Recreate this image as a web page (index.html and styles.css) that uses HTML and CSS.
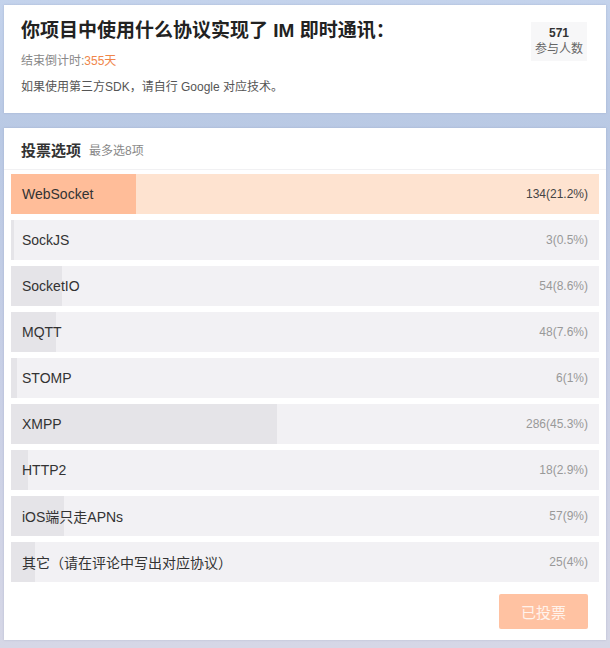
FILE: index.html
```html
<!DOCTYPE html>
<html lang="zh">
<head>
<meta charset="utf-8">
<title>投票</title>
<link rel="stylesheet" href="styles.css">
</head>
<body>
<div class="page">
  <section class="card intro">
    <div class="intro-main">
      <h1 class="title">你项目中使用什么协议实现了 IM 即时通讯：</h1>
      <p class="countdown">结束倒计时:<span class="days">355天</span></p>
      <p class="desc">如果使用第三方SDK，请自行 Google 对应技术。</p>
    </div>
    <div class="badge">
      <div class="badge-num">571</div>
      <div class="badge-label">参与人数</div>
    </div>
  </section>

  <section class="card poll">
    <div class="poll-head">
      <span class="poll-title">投票选项</span>
      <span class="poll-limit">最多选8项</span>
    </div>
    <div class="options">
      <div class="option option-top" style="--p:21.2%"><span class="label">WebSocket</span><span class="value">134(21.2%)</span></div>
      <div class="option" style="--p:0.5%"><span class="label">SockJS</span><span class="value">3(0.5%)</span></div>
      <div class="option" style="--p:8.6%"><span class="label">SocketIO</span><span class="value">54(8.6%)</span></div>
      <div class="option" style="--p:7.6%"><span class="label">MQTT</span><span class="value">48(7.6%)</span></div>
      <div class="option" style="--p:1%"><span class="label">STOMP</span><span class="value">6(1%)</span></div>
      <div class="option" style="--p:45.3%"><span class="label">XMPP</span><span class="value">286(45.3%)</span></div>
      <div class="option" style="--p:2.9%"><span class="label">HTTP2</span><span class="value">18(2.9%)</span></div>
      <div class="option" style="--p:9%"><span class="label">iOS端只走APNs</span><span class="value">57(9%)</span></div>
      <div class="option" style="--p:4%"><span class="label">其它（请在评论中写出对应协议）</span><span class="value">25(4%)</span></div>
    </div>
    <div class="poll-foot">
      <button class="voted" type="button">已投票</button>
    </div>
  </section>
</div>
</body>
</html>
```
FILE: styles.css
```css
* { box-sizing: border-box; }
html, body { margin: 0; padding: 0; }
body {
  width: 610px;
  height: 648px;
  overflow: hidden;
  font-family: "Liberation Sans", "Noto Sans CJK SC", sans-serif;
  background: linear-gradient(180deg, #c4d3ec 0%, #b9c9e4 20%, #c9d0e6 60%, #d6d7e6 100%);
  color: #333;
}
.page {
  padding: 5px 4px 0 4px;
  display: flex;
  flex-direction: column;
  gap: 15px;
}
.card {
  background: #fff;
  box-shadow: 0 0 2px rgba(90, 100, 140, 0.25);
}
.intro {
  display: flex;
  align-items: flex-start;
  justify-content: space-between;
  padding: 14px 19px 16px 17px;
  height: 108px;
}
.title {
  margin: 0;
  font-size: 19px;
  line-height: 24px;
  font-weight: bold;
  color: #222;
}
.countdown {
  margin: 9px 0 0 0;
  font-size: 12px;
  line-height: 18px;
  color: #888;
}
.days { color: #f0864a; }
.desc {
  margin: 8px 0 0 0;
  font-size: 12px;
  line-height: 18px;
  color: #555;
}
.badge {
  margin-top: 3px;
  width: 56px;
  height: 39px;
  background: #f7f7f8;
  display: flex;
  flex-direction: column;
  align-items: center;
  justify-content: center;
}
.badge-num {
  font-size: 12px;
  line-height: 15px;
  font-weight: bold;
  color: #333;
}
.badge-label {
  font-size: 12px;
  line-height: 17px;
  color: #666;
}
.poll {
  display: flex;
  flex-direction: column;
  height: 512px;
}
.poll-head {
  height: 40px;
  padding: 0 17px;
  display: flex;
  align-items: center;
  gap: 8px;
  border-bottom: 1px solid #f1f1f3;
  margin-top: 2px;
}
.poll-title {
  font-size: 15px;
  font-weight: bold;
  color: #333;
}
.poll-limit {
  font-size: 12px;
  color: #888;
}
.options {
  padding: 4px 7px 0 7px;
  display: flex;
  flex-direction: column;
  gap: 6px;
}
.option {
  height: 40px;
  display: flex;
  align-items: center;
  justify-content: space-between;
  padding: 0 11px;
  background: linear-gradient(90deg, #e5e4e8 0, #e5e4e8 var(--p), #f2f1f4 var(--p), #f2f1f4 100%);
}
.option-top {
  background: linear-gradient(90deg, #ffbd99 0, #ffbd99 var(--p), #fee3d0 var(--p), #fee3d0 100%);
}
.label {
  font-size: 14px;
  color: #333;
}
.value {
  font-size: 12px;
  color: #999;
}
.option-top .value { color: #444; }
.poll-foot {
  display: flex;
  justify-content: flex-end;
  padding: 12px 18px 0 0;
}
.voted {
  width: 89px;
  height: 35px;
  border: none;
  border-radius: 2px;
  background: #ffc2a2;
  color: #fff3ec;
  font-family: "Liberation Sans", "Noto Sans CJK SC", sans-serif;
  font-size: 15px;
  padding: 0;
}
```
